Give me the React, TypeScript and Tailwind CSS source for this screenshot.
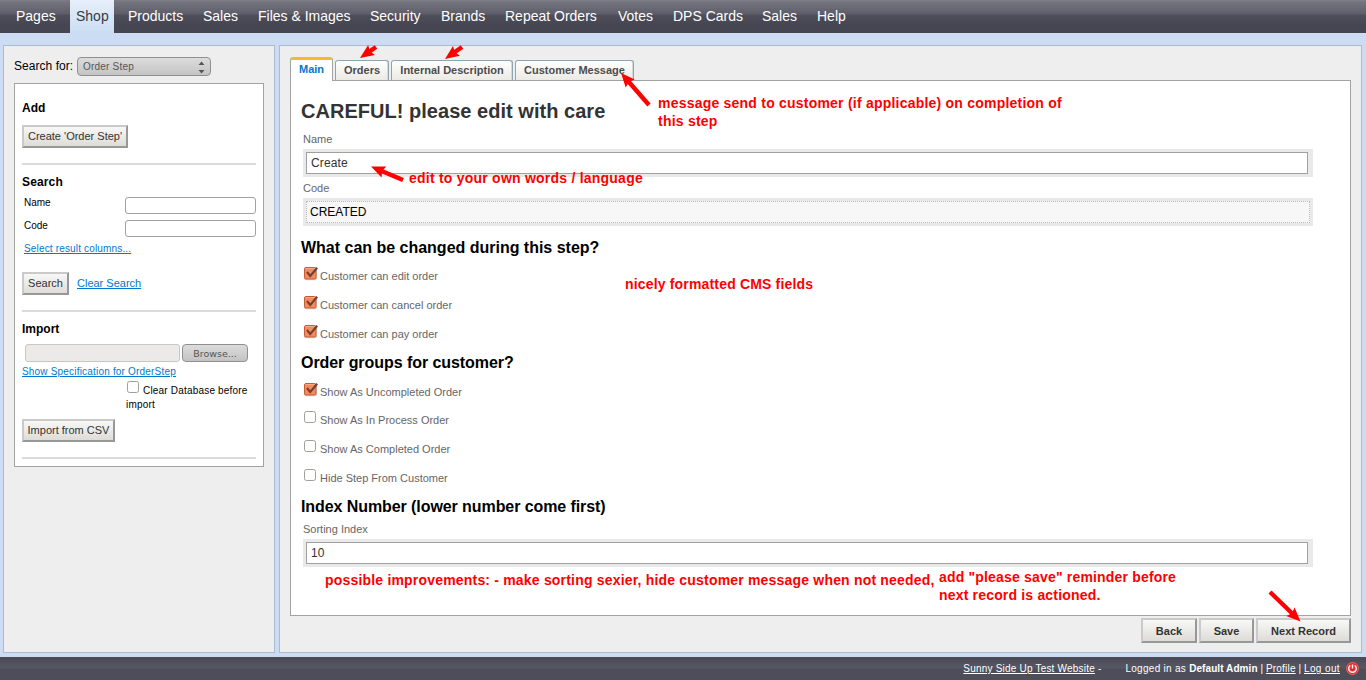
import React from "react";

const NAV: [string, string][] = [
  ["Pages", "w-[52px]"],
  ["Shop", "w-11"],
  ["Products", "w-[67px]"],
  ["Sales", "w-[47px]"],
  ["Files & Images", "w-[104px]"],
  ["Security", "w-[63px]"],
  ["Brands", "w-14"],
  ["Repeat Orders", "w-[105px]"],
  ["Votes", "w-[47px]"],
  ["DPS Cards", "w-[81px]"],
  ["Sales", "w-[47px]"],
  ["Help", "w-[42px]"],
];

const BEVEL =
  "flex items-center justify-center border-2 border-t-[#cacaca] border-l-[#cacaca] border-r-[#989898] border-b-[#989898] bg-linear-to-b from-[#f8f8f7] to-[#dddcd7] text-[11px] text-[#333] whitespace-nowrap";

function Rule({ className }: { className: string }) {
  return <div className={`h-0.5 bg-[#dbdbdb] ${className}`} />;
}

function CheckIcon({ checked }: { checked: boolean }) {
  return (
    <svg width="15" height="14" viewBox="0 0 15 14" className="shrink-0">
      {checked ? (
        <>
          <rect x="0" y="1" width="13" height="12.3" rx="2" fill="#d9d2cf" />
          <rect x="0.5" y="0.5" width="11.5" height="11.5" rx="1.5" fill="#f68a5e" stroke="#c65a33" />
          <path d="M1.5 1.5h9.5" stroke="#f9aa88" />
          <path d="M3 5l3.2 4L13.2 0.8" fill="none" stroke="#74402f" strokeWidth="2.1" />
        </>
      ) : (
        <rect x="0.5" y="0.5" width="11" height="11" rx="2" fill="#fff" stroke="#a29f99" />
      )}
    </svg>
  );
}

function CheckRow({ label, checked = false, className = "h-[29px]" }: { label: string; checked?: boolean; className?: string }) {
  return (
    <div className={`flex pl-[13px] pt-[5px] ${className}`}>
      <CheckIcon checked={checked} />
      <span className="ml-px text-[11px] leading-[19px] text-[#666]">{label}</span>
    </div>
  );
}

function Label({ text, className }: { text: string; className: string }) {
  return <div className={`h-4 pl-3 text-[11px] leading-4 text-[#666] ${className}`}>{text}</div>;
}

function Field({ value }: { value: string }) {
  return (
    <div className="mt-0.5 ml-3 h-7 w-[1010px] bg-[#e9e9e9] pt-[3px] pl-[3px]">
      <div className="h-[22px] w-[1002px] border border-[#a0a0a0] bg-white pl-1 text-xs leading-5 tracking-[0.15px] text-[#333]">{value}</div>
    </div>
  );
}

function Heading({ text, className }: { text: string; className: string }) {
  return <h2 className={`h-[21px] pl-2.5 text-base leading-[21px] font-bold text-black ${className}`}>{text}</h2>;
}

function Tab({ text, width }: { text: string; width: string }) {
  return (
    <div className={`h-5 rounded-t-[3px] border border-b-0 border-[#8fa6b2] bg-linear-to-b from-white to-[#ebeae4] text-center text-[11px] leading-[19px] font-bold text-[#4c4c4c] shadow-[inset_-1px_0_0_#d5d9da] ${width}`}>
      {text}
    </div>
  );
}

function Arrow({ x1, y1, x2, y2 }: { x1: number; y1: number; x2: number; y2: number }) {
  const len = Math.hypot(x2 - x1, y2 - y1);
  const ux = (x2 - x1) / len;
  const uy = (y2 - y1) / len;
  const bx = x2 - ux * 14;
  const by = y2 - uy * 14;
  const nx = x2 - ux * 12;
  const ny = y2 - uy * 12;
  return (
    <g fill="#f00" stroke="#f00">
      <line x1={x1} y1={y1} x2={x2 - ux * 9} y2={y2 - uy * 9} strokeWidth="4.4" />
      <polygon
        stroke="none"
        points={`${x2},${y2} ${bx - uy * 6},${by + ux * 6} ${nx},${ny} ${bx + uy * 6},${by - ux * 6}`}
      />
    </g>
  );
}

function Sidebar() {
  return (
    <aside className="h-[608px] w-[272px] border border-[#a9bcd2] bg-[#eee] pl-2.5">
      <div className="flex pt-[11px]">
        <span className="w-[63px] text-xs leading-[19px] tracking-[0.05px] text-black">Search for:</span>
        <div className="flex h-[19px] w-[134px] items-center justify-between rounded-[4px] border border-[#8f8f8f] bg-linear-to-b from-[#dcdcdc] to-[#c4c4c4] pr-[5px] pl-[5px] text-[10px] tracking-[0.2px] text-[#555]">
          <span>Order Step</span>
          <svg width="7" height="13" viewBox="0 0 7 13" fill="#555" className="mt-px">
            <path d="M3.5 0.5L6.5 4h-6zM3.5 12.5L6.5 9h-6z" />
          </svg>
        </div>
      </div>
      <div className="mt-[7px] h-[384px] w-[250px] border border-[#a3a3a3] bg-white px-[7px]">
        <h3 className="mt-4 h-4 text-xs leading-4 font-bold">Add</h3>
        <button className={`mt-[9px] h-[23px] w-[106px] ${BEVEL}`}>Create 'Order Step'</button>
        <Rule className="mt-[15px]" />
        <h3 className="mt-[9px] h-4 text-xs leading-4 font-bold tracking-[0.15px]">Search</h3>
        <div className="mt-[7px] flex h-[17px] justify-between">
          <span className="pl-0.5 text-[10px] leading-[11px]">Name</span>
          <div className="h-[17px] w-[131px] rounded-[3px] border border-[#a3a19d] bg-white" />
        </div>
        <div className="mt-1.5 flex h-[17px] justify-between">
          <span className="pl-0.5 text-[10px] leading-[11px]">Code</span>
          <div className="h-[17px] w-[131px] rounded-[3px] border border-[#a3a19d] bg-white" />
        </div>
        <div className="mt-[5px] h-3.5 pl-0.5 text-[10px] leading-[14px] tracking-[0.16px] text-[#0078d0] underline">Select result columns...</div>
        <div className="mt-4 flex h-[23px] items-center gap-2">
          <button className={`h-[23px] w-[47px] ${BEVEL}`}>Search</button>
          <span className="text-[11px] text-[#0078d0] underline">Clear Search</span>
        </div>
        <Rule className="mt-[15px]" />
        <h3 className="mt-[9px] h-4 text-xs leading-4 font-bold">Import</h3>
        <div className="mt-[7px] flex h-[18px] gap-0.5 pl-[3px]">
          <div className="w-[155px] rounded-[3px] border border-[#c9c7c4] bg-[#ebeae8]" />
          <div className="w-[66px] rounded-[4px] border border-[#8f8f8f] bg-linear-to-b from-[#dcdcdc] to-[#c4c4c4] text-center font-['DejaVu_Sans',sans-serif] text-[9.5px] leading-[17px] text-[#555]">
            Browse...
          </div>
        </div>
        <div className="mt-1 h-3 text-[10px] leading-[12px] tracking-[0.19px] text-[#0078d0] underline">Show Specification for OrderStep</div>
        <div className="mt-[3px] ml-[104px] h-[30px] text-[10px] leading-[14px] tracking-[0.19px]">
          <div className="flex pl-px">
            <CheckIcon checked={false} />
            <span className="ml-px pt-1 leading-[12px] whitespace-nowrap">Clear Database before</span>
          </div>
          <div className="mt-px h-[14px]">import</div>
        </div>
        <button className={`mt-2 h-[23px] w-[93px] ${BEVEL}`}>Import from CSV</button>
        <Rule className="mt-[15px]" />
      </div>
    </aside>
  );
}

export default function App() {
  return (
    <div className="relative flex h-[680px] w-[1366px] flex-col overflow-hidden bg-[#ccddf3] font-['Liberation_Sans',Arial,sans-serif] text-black">
      <nav className="flex h-[33px] gap-2 bg-[linear-gradient(#7f7f8a_0px,#74747f_2px,#5e5e6a_14px,#4f4f5b_15px,#454652_25px,#454652_33px)] pl-2.5">
        {NAV.map(([name, width], i) => (
          <div
            key={i}
            className={`${width} px-1.5 text-sm leading-[33px] whitespace-nowrap ${
              name === "Shop" ? "bg-linear-to-b from-[#e6effa] to-[#ccddf3] text-[#333b45]" : "text-white"
            }`}
          >
            <span className="block origin-[50%_21px] scale-y-[1.08]">{name}</span>
          </div>
        ))}
      </nav>

      <div className="mt-3 flex gap-1 pl-[3px]">
        <Sidebar />
        <main className="h-[608px] w-[1083px] border border-[#a9bcd2] bg-[#eee] pt-[11px] pl-2.5">
          <div className="flex h-[23px] items-end gap-0.5">
            <div className="z-10 -mb-px h-6 w-[43px] rounded-t-[3px] border border-t-[3px] border-b-0 border-[#a3a3a3] border-t-[#fbb829] bg-white text-center text-[11px] leading-[19px] font-bold text-[#0078d0]">
              Main
            </div>
            <Tab text="Orders" width="w-[54px]" />
            <Tab text="Internal Description" width="w-[122px]" />
            <Tab text="Customer Message" width="w-[119px]" />
          </div>
          <section className="h-[536px] w-[1061px] border border-[#a3a3a3] bg-white">
            <h1 className="mt-[19px] h-[22px] pl-2.5 text-xl leading-[22px] font-bold tracking-[0.03px] text-[#333]">CAREFUL! please edit with care</h1>
            <Label text="Name" className="mt-[9px]" />
            <Field value="Create" />
            <Label text="Code" className="mt-[3px]" />
            <div className="mt-0.5 ml-3 h-7 w-[1010px] bg-[#e9e9e9] p-[3px]">
              <div className="h-[22px] border border-dotted border-[#bbb] bg-[#f7f7f7] pl-[3px] text-xs leading-5">CREATED</div>
            </div>
            <Heading text="What can be changed during this step?" className="mt-[11px] mb-1 tracking-[-0.01px]" />
            <CheckRow label="Customer can edit order" checked />
            <CheckRow label="Customer can cancel order" checked />
            <CheckRow label="Customer can pay order" checked />
            <Heading text="Order groups for customer?" className="mt-[3px] mb-[5px] tracking-[-0.06px]" />
            <CheckRow label="Show As Uncompleted Order" checked className="h-7" />
            <CheckRow label="Show As In Process Order" />
            <CheckRow label="Show As Completed Order" />
            <CheckRow label="Hide Step From Customer" />
            <Heading text="Index Number (lower number come first)" className="mt-[3px] tracking-[-0.08px]" />
            <Label text="Sorting Index" className="mt-1" />
            <Field value="10" />
          </section>
          <div className="mt-0.5 flex w-[1061px] justify-end gap-0.5 font-bold">
            <button className={`h-[25px] w-14 pt-0.5 ${BEVEL}`}>Back</button>
            <button className={`h-[25px] w-[55px] pt-0.5 ${BEVEL}`}>Save</button>
            <button className={`h-[25px] w-[95px] pt-0.5 ${BEVEL}`}>Next Record</button>
          </div>
        </main>
      </div>

      <footer className="mt-1 flex h-[23px] items-center justify-end bg-[linear-gradient(#4a4955,#575864_11px,#4d4e59_12px,#4d4e59)] pr-[7px] text-[10px] tracking-[0.2px] whitespace-pre text-white">
        <span className="underline">Sunny Side Up Test Website</span>
        <span className="mr-6"> -</span>
        <span className="tracking-[0.28px]">Logged in as </span>
        <b className="tracking-[0.08px]">Default Admin</b>
        <span className="tracking-[0.05px]"> | </span>
        <span className="underline">Profile</span>
        <span className="tracking-[0.05px]"> | </span>
        <span className="tracking-[0.38px] underline">Log out</span>
        <svg width="13" height="13" viewBox="0 0 13 13" className="ml-1.5">
          <circle cx="6.5" cy="6.5" r="6" fill="#e02a2c" stroke="#ea6466" />
          <path d="M4.3 3.4a3.8 3.8 0 1 0 4.4 0M6.5 2.6v4" fill="none" stroke="#fff0f0" strokeWidth="1.5" />
        </svg>
      </footer>

      <div className="text-sm leading-[18px] font-bold whitespace-nowrap text-[#f00]">
        <p className="absolute top-[94px] left-[658px] tracking-[0.22px]">
          message send to customer (if applicable) on completion of
          <br />
          this step
        </p>
        <p className="absolute top-[169px] left-[409px] tracking-[0.23px]">edit to your own words / language</p>
        <p className="absolute top-[275px] left-[625px] tracking-[0.17px]">nicely formatted CMS fields</p>
        <p className="absolute top-[571px] left-[325px] tracking-[0.19px]">
          possible improvements: - make sorting sexier, hide customer message when not needed,
        </p>
        <p className="absolute top-[568px] left-[939px] tracking-[0.18px]">
          add "please save" reminder before
          <br />
          next record is actioned.
        </p>
      </div>
      <svg className="absolute top-0 left-0" width="1366" height="680" viewBox="0 0 1366 680">
        <Arrow x1={376} y1={47} x2={360} y2={58} />
        <Arrow x1={462} y1={47} x2={445} y2={59} />
        <Arrow x1={649} y1={105} x2={621} y2={73} />
        <Arrow x1={403} y1={180} x2={371} y2={166.5} />
        <Arrow x1={1270} y1={592} x2={1300.5} y2={621.5} />
      </svg>
    </div>
  );
}
